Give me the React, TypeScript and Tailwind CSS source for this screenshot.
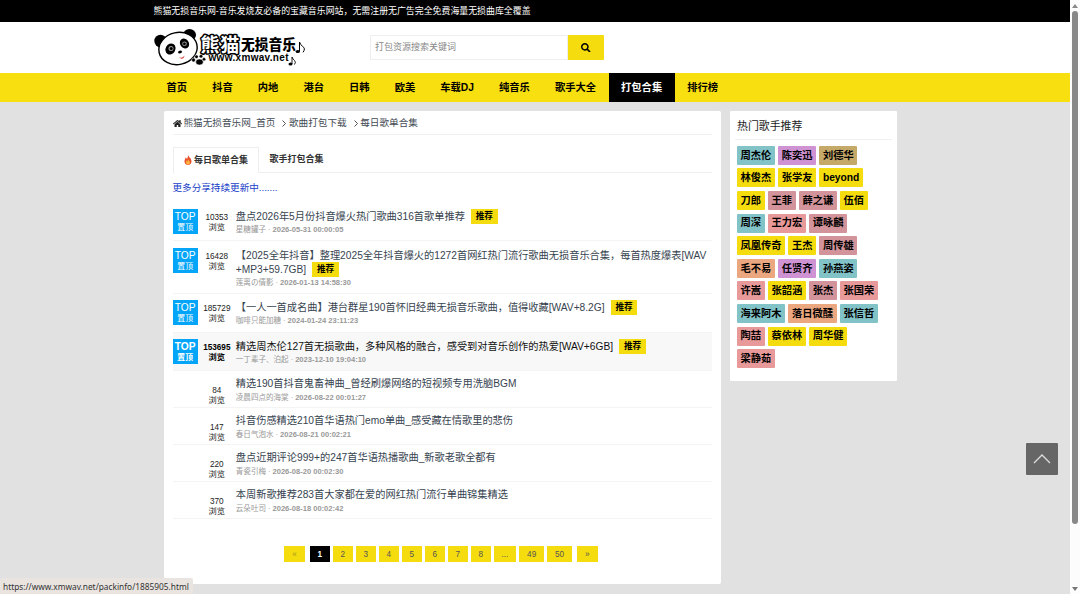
import { clsx } from "clsx";
import { FaHome, FaSearch } from "react-icons/fa";

const navItems = [
  "首页",
  "抖音",
  "内地",
  "港台",
  "日韩",
  "欧美",
  "车载DJ",
  "纯音乐",
  "歌手大全",
  "打包合集",
  "排行榜",
];

type Song = {
  views: string;
  title: string[];
  author: string;
  date: string;
  top?: boolean;
  hovered?: boolean;
};

const songs: Song[] = [
  {
    views: "10353",
    title: ["盘点2026年5月份抖音爆火热门歌曲316首歌单推荐"],
    author: "星糖罐子",
    date: "2026-05-31 00:00:05",
    top: true,
  },
  {
    views: "16428",
    title: [
      "【2025全年抖音】整理2025全年抖音爆火的1272首网红热门流行歌曲无损音乐合集，每首热度爆表[WAV",
      "+MP3+59.7GB]",
    ],
    author: "莲离の倩影",
    date: "2026-01-13 14:58:30",
    top: true,
  },
  {
    views: "185729",
    title: ["【一人一首成名曲】港台群星190首怀旧经典无损音乐歌曲，值得收藏[WAV+8.2G]"],
    author: "咖啡只能加糖",
    date: "2024-01-24 23:11:23",
    top: true,
  },
  {
    views: "153695",
    title: ["精选周杰伦127首无损歌曲，多种风格的融合，感受到对音乐创作的热爱[WAV+6GB]"],
    author: "一丁辈子、泊起",
    date: "2023-12-10 19:04:10",
    top: true,
    hovered: true,
  },
  {
    views: "84",
    title: ["精选190首抖音鬼畜神曲_曾经刷爆网络的短视频专用洗脑BGM"],
    author: "凌晨四点的海棠",
    date: "2026-08-22 00:01:27",
  },
  {
    views: "147",
    title: ["抖音伤感精选210首华语热门emo单曲_感受藏在情歌里的悲伤"],
    author: "春日气泡水",
    date: "2026-08-21 00:02:21",
  },
  {
    views: "220",
    title: ["盘点近期评论999+的247首华语热播歌曲_新歌老歌全都有"],
    author: "青瓷引梅",
    date: "2026-08-20 00:02:30",
  },
  {
    views: "370",
    title: ["本周新歌推荐283首大家都在爱的网红热门流行单曲锦集精选"],
    author: "云朵吐司",
    date: "2026-08-18 00:02:42",
  },
];

const colors = {
  yellow: "bg-[#f5dc0f]",
  teal: "bg-[#82c3c8]",
  violet: "bg-[#cf92d3]",
  khaki: "bg-[#c5a968]",
  rose: "bg-[#d2949a]",
  pink: "bg-[#e89a9b]",
  orange: "bg-[#eba880]",
};

const singerRows: [string, keyof typeof colors][][] = [
  [["周杰伦", "teal"], ["陈奕迅", "violet"], ["刘德华", "khaki"]],
  [["林俊杰", "yellow"], ["张学友", "yellow"], ["beyond", "yellow"]],
  [["刀郎", "yellow"], ["王菲", "rose"], ["薛之谦", "rose"], ["伍佰", "yellow"]],
  [["周深", "teal"], ["王力宏", "pink"], ["谭咏麟", "rose"]],
  [["凤凰传奇", "yellow"], ["王杰", "yellow"], ["周传雄", "rose"]],
  [["毛不易", "orange"], ["任贤齐", "violet"], ["孙燕姿", "teal"]],
  [["许嵩", "pink"], ["张韶涵", "yellow"], ["张杰", "rose"], ["张国荣", "pink"]],
  [["海来阿木", "teal"], ["落日微醺", "orange"], ["张信哲", "teal"]],
  [["陶喆", "pink"], ["蔡依林", "yellow"], ["周华健", "yellow"]],
  [["梁静茹", "pink"]],
];

const pages = ["«", "1", "2", "3", "4", "5", "6", "7", "8", "...", "49", "50", "»"];

const Logo = () => (
  <svg width="152" height="40" viewBox="0 0 152 40" className="block shrink-0">
    <ellipse cx="6.5" cy="13" rx="6.2" ry="6.3" />
    <ellipse cx="35.5" cy="7" rx="6.5" ry="6" />
    <ellipse cx="24" cy="20.5" rx="19.3" ry="16" fill="#fff" stroke="#000" strokeWidth="1.4" transform="rotate(-12 24 20.5)" />
    <ellipse cx="16.5" cy="21" rx="4.8" ry="5.8" transform="rotate(30 16.5 21)" />
    <ellipse cx="30.5" cy="15.5" rx="4.3" ry="5.3" transform="rotate(-35 30.5 15.5)" />
    <circle cx="17" cy="20.5" r="2.5" fill="#999" />
    <circle cx="30.5" cy="15.8" r="2.3" fill="#999" />
    <circle cx="17.2" cy="20.5" r="1.5" />
    <circle cx="30.4" cy="15.8" r="1.4" />
    <ellipse cx="26" cy="24" rx="2" ry="1.4" transform="rotate(-15 26 24)" />
    <path d="M25 29.3q3.5 1.3 5.5-1.8-.7 3.500-3.200 3.200z" fill="#d8362f" />
    <g stroke="#fff" strokeWidth=".5">
      <ellipse cx="45.5" cy="34" rx="3.8" ry="3" />
      <circle cx="39.5" cy="32" r="1.9" />
      <circle cx="42.5" cy="28.7" r="1.8" />
      <circle cx="47" cy="28.300" r="1.800" />
      <circle cx="50" cy="31.300" r="1.700" />
    </g>
    <g className="font-['Noto_Sans_CJK_SC',sans-serif]">
      <text x="46.500" y="24" fontSize="19" letterSpacing=".8" fill="#fff" stroke="#000" strokeWidth="3" strokeLinejoin="round" paintOrder="stroke" className="font-bold">熊猫</text>
      <text x="87" y="22" fontSize="14.500" textLength="55" lengthAdjust="spacingAndGlyphs" className="font-black">无损音乐</text>
    </g>
    <text x="54.500" y="33" fontSize="10" textLength="80" lengthAdjust="spacing" className="font-['Liberation_Sans',sans-serif] font-bold">www.xmwav.net</text>
    <g fill="none" stroke="#000">
      <path d="M145.500 23V14q1 3 3 4.300 3.500 2.200.5 6" />
      <path d="M138 36v-7q1 2.500 2.500 3.500 1.800 1.600 0 4" strokeWidth=".9" />
    </g>
    <ellipse cx="143.800" cy="23.500" rx="2.200" ry="1.600" />
    <ellipse cx="136.500" cy="36" rx="2" ry="1.500" />
  </svg>
);

const Flame = () => (
  <svg width="8" height="10" viewBox="0 0 16 20" className="mr-[2px] inline-block">
    <path d="M8 0c1 4 7 6 7 12.500A7 7 0 0 1 8 20a7 7 0 0 1-7-7.500C1 9 3 7 3.500 4.500 5 5.500 5.500 7 5.500 8 7.500 6 8 3 8 0z" fill="#e8522c" />
    <path d="M8.500 8c.5 3 3.500 4 3.500 7.500a4 4 0 0 1-8 0C4 13 5 12 5.500 10.500c1 .5 1.500 1.500 1.500 2C8 11 8.500 10 8.500 8z" fill="#fbb040" />
  </svg>
);

const Separator = () => (
  <svg width="4" height="7" viewBox="0 0 4 7" className="mr-[2.500px] ml-[7px]" fill="none" stroke="#555">
    <path d="M.5.5l3 3-3 3" />
  </svg>
);

const SongRow = ({ song }: { song: Song }) => (
  <li
    className={clsx(
      "flex border-b border-[#f4f4f4]",
      song.hovered && "bg-[#f8f8f8]",
      song.title.length > 1 ? "h-[52.500px]" : song.hovered ? "h-[38.500px]" : song.top ? "h-[39px]" : "h-[37px]"
    )}>
    <div className="w-[25.300px] shrink-0 pt-[6.600px]">
      {song.top && (
        <div
          className={clsx(
            "h-[25.300px] bg-[#03a5f8] text-center text-white",
            song.hovered && "font-bold"
          )}>
          <div className="pt-[1px] text-[10.200px] leading-[13px]">TOP</div>
          <div className="text-[7.800px] leading-[10px]">置顶</div>
        </div>
      )}
    </div>
    <div
      className={clsx(
        "w-[38px] shrink-0 text-center text-[8.200px] leading-[10px] text-[#222]",
        song.hovered && "font-bold text-black",
        song.top ? "pt-[10.700px]" : "pt-[14.500px]"
      )}>
      <div>{song.views}</div>
      <div>浏览</div>
    </div>
    <div className={clsx("min-w-0 grow whitespace-nowrap", song.top ? "pt-[7.200px]" : "pt-[6px]")}>
      {song.title.map((line, i) => (
        <div
          key={line}
          className={clsx(
            "flex h-[14.200px] items-center text-[10.210px]",
            song.hovered ? "text-[#111]" : "text-[#374450]"
          )}>
          {line}
          {song.top && i === song.title.length - 1 && (
            <span className="ml-[6px] flex h-[14.700px] items-center bg-[#f5dc0f] px-[4.800px] text-[8.600px] font-bold text-black">
              推荐
            </span>
          )}
        </div>
      ))}
      <div className="flex h-[12px] items-center text-[7.550px] text-[#999]">
        <span>{song.author}</span>
        <span className="mx-[2px]">·</span>
        <span className="font-bold">{song.date}</span>
      </div>
    </div>
  </li>
);

const Header = () => (
  <header>
    <div className="h-[22px] bg-black pl-[153.500px] text-[8.920px] leading-[22px] text-white">
      熊猫无损音乐网-音乐发烧友必备的宝藏音乐网站，无需注册无广告完全免费海量无损曲库全覆盖
    </div>
    <div className="flex h-[51px] items-center bg-white pl-[154px]">
      <Logo />
      <div className="ml-[64px] flex h-[24.500px]">
        <div className="flex w-[197.700px] items-center border border-[#eee] pl-[4px] text-[9px] text-[#888]">
          打包资源搜索关键词
        </div>
        <button className="flex w-[36.300px] items-center justify-center rounded-r-[1px] bg-[#f5dc0f]">
          <FaSearch className="size-[9.500px]" />
        </button>
      </div>
    </div>
    <nav className="flex h-[28.500px] bg-[#f7df10] pl-[154px] text-[10.270px] font-bold text-black">
      {navItems.map((item) => (
        <a
          key={item}
          className={clsx(
            "flex items-center px-[12.550px] pt-[1px]",
            item === "打包合集" && "bg-black text-white"
          )}>
          {item}
        </a>
      ))}
    </nav>
  </header>
);

const Pagination = () => (
  <div className="mt-[27px] flex justify-center gap-[2.700px] pr-[2px] text-[8.200px] text-[#555]">
    {pages.map((page) => (
      <a
        key={page}
        className={clsx(
          "flex h-[16.300px] items-center justify-center pt-[1px]",
          page === "1" ? "bg-black font-bold text-white" : "bg-[#f5dc0f]",
          page.length === 2 ? "w-[25.300px]" : page === "..." ? "w-[22.700px]" : "w-[20.300px]",
          page === "«" && "mr-[2.300px] text-[#a59824]",
          page === "»" && "ml-[2.300px]"
        )}>
        {page}
      </a>
    ))}
  </div>
);

export default function App() {
  return (
    <div className="relative flex h-[594px] w-[1080px] overflow-hidden bg-[#e1e1e1] font-['Liberation_Sans','Noto_Sans_CJK_SC',sans-serif]">
      <div className="w-[1070px] shrink-0">
        <Header />
        <div className="flex items-start gap-[9.500px] pt-[9.500px] pl-[163.500px]">
          <main className="h-[473px] w-[557px] rounded-[2px] bg-white px-[9px]">
            <div className="flex h-[23.500px] items-center border-b border-[#f0f0f0] pt-[1.500px] text-[9.650px] text-[#444c55]">
              <FaHome className="mr-[2px] size-[9px] text-[#222]" />
              <span>熊猫无损音乐网_首页</span>
              <Separator />
              <span>歌曲打包下载</span>
              <Separator />
              <span>每日歌单合集</span>
            </div>
            <div className="mt-[12.500px] flex h-[25.500px] text-[9px] font-bold text-[#333]">
              <div className="flex w-[86px] items-center justify-center border border-b-0 border-[#eee] pl-[1px]">
                <Flame />
                每日歌单合集
              </div>
              <div className="flex grow items-center border-b border-[#eee] pt-[1px] pl-[11px]">歌手打包合集</div>
            </div>
            <div className="h-[29.500px] text-[9.600px] leading-[30px] text-[#1740c8]">更多分享持续更新中.......</div>
            <ul>
              {songs.map((song) => (
                <SongRow key={song.title[0]} song={song} />
              ))}
            </ul>
            <Pagination />
          </main>
          <aside className="h-[270px] w-[167px] rounded-[1px] bg-white px-[5px]">
            <h3 className="h-[28.500px] border-b border-[#f0f0f0] pl-[2px] text-[10.900px] leading-[30px] text-[#222]">
              热门歌手推荐
            </h3>
            <div className="mt-[6.300px] flex flex-col gap-[3.600px] pl-[2px]">
              {singerRows.map((row) => (
                <div key={row[0][0]} className="flex gap-[3.200px]">
                  {row.map(([name, color]) => (
                    <a
                      key={name}
                      className={clsx(
                        "flex h-[19px] items-center rounded-[1px] px-[3.600px] text-[10.250px] font-bold text-black",
                        colors[color]
                      )}>
                      {name}
                    </a>
                  ))}
                </div>
              ))}
            </div>
          </aside>
        </div>
      </div>

      <div className="flex w-[10px] flex-col items-center bg-[#fcfcfc] pt-[4px] pb-[3px]">
        <svg width="6" height="4" viewBox="0 0 6 4" fill="#888">
          <path d="M3 0l3 4H0z" />
        </svg>
        <div className="mt-[3px] h-[513px] w-[6px] rounded-full bg-[#888]" />
        <svg width="6" height="4" viewBox="0 0 6 4" fill="#777" className="mt-auto">
          <path d="M0 0h6L3 4z" />
        </svg>
      </div>

      <button className="absolute top-[443px] left-[1026px] flex size-[32px] items-center justify-center rounded-[1px] bg-[#666]">
        <svg width="18" height="10" viewBox="0 0 18 10" fill="none" stroke="#ddd" strokeWidth="1.300">
          <path d="M1 9l8-8 8 8" />
        </svg>
      </button>
      <div className="absolute bottom-0 left-0 h-[16px] w-[193px] rounded-tr-[2px] bg-[#e9e4e0] pl-[3px] font-['Noto_Sans',sans-serif] text-[8.330px] leading-[17px] whitespace-nowrap text-[#333]">
        https://www.xmwav.net/packinfo/1885905.html
      </div>
    </div>
  );
}
